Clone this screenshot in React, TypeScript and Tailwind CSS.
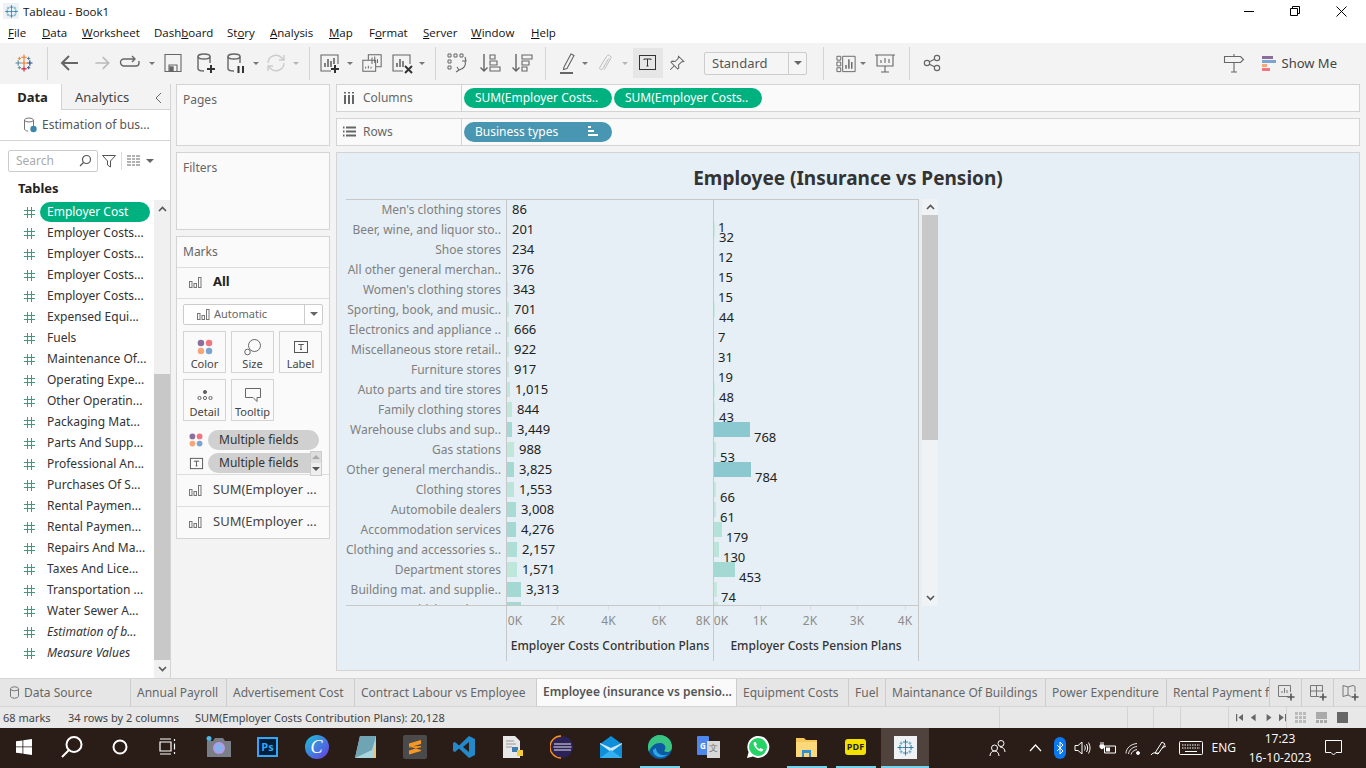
import type { ReactNode } from 'react';

const MENU = [
  { u: 'F', rest: 'ile', w: 'w-[34px]' },
  { u: 'D', rest: 'ata', w: 'w-[40px]' },
  { u: 'W', rest: 'orksheet', w: 'w-[72px]' },
  { pre: 'Dash', u: 'b', rest: 'oard', w: 'w-[73px]' },
  { pre: 'St', u: 'o', rest: 'ry', w: 'w-[43px]' },
  { u: 'A', rest: 'nalysis', w: 'w-[59px]' },
  { u: 'M', rest: 'ap', w: 'w-[40px]' },
  { pre: 'F', u: 'o', rest: 'rmat', w: 'w-[54px]' },
  { u: 'S', rest: 'erver', w: 'w-[48px]' },
  { u: 'W', rest: 'indow', w: 'w-[60px]' },
  { u: 'H', rest: 'elp', w: 'w-[40px]' },
];

const FIELDS = [
  'Employer Costs...', 'Employer Costs...', 'Employer Costs...', 'Employer Costs...', 'Expensed Equi...', 'Fuels',
  'Maintenance Of...', 'Operating Expe...', 'Other Operatin...', 'Packaging Mat...', 'Parts And Supp...', 'Professional An...',
  'Purchases Of S...', 'Rental Paymen...', 'Rental Paymen...', 'Repairs And Ma...', 'Taxes And Lice...', 'Transportation ...', 'Water Sewer A...',
];

const CHART_ROWS = [
  { label: "Men's clothing stores", v1: '86', w1: 0, c1: '', v2: '1', w2: 0, c2: '', dy: 'translate-y-[17px]' },
  { label: 'Beer, wine, and liquor sto..', v1: '201', w1: 0, c1: '', v2: '32', w2: 1, c2: 'bg-[#cdeade]', dy: 'translate-y-[7px]' },
  { label: 'Shoe stores', v1: '234', w1: 0, c1: '', v2: '12', w2: 0, c2: '', dy: 'translate-y-[7px]' },
  { label: 'All other general merchan..', v1: '376', w1: 0, c1: '', v2: '15', w2: 0, c2: '', dy: 'translate-y-[7px]' },
  { label: "Women's clothing stores", v1: '343', w1: 1, c1: 'bg-[#cdeade]', v2: '15', w2: 0, c2: '', dy: 'translate-y-[7px]' },
  { label: 'Sporting, book, and  music..', v1: '701', w1: 2, c1: 'bg-[#c6e8dc]', v2: '44', w2: 1, c2: 'bg-[#cdeade]', dy: 'translate-y-[7px]' },
  { label: 'Electronics and appliance ..', v1: '666', w1: 2, c1: 'bg-[#c6e8dc]', v2: '7', w2: 0, c2: '', dy: 'translate-y-[7px]' },
  { label: 'Miscellaneous store retail..', v1: '922', w1: 2, c1: 'bg-[#c6e8dc]', v2: '31', w2: 0, c2: '', dy: 'translate-y-[7px]' },
  { label: 'Furniture stores', v1: '917', w1: 2, c1: 'bg-[#c6e8dc]', v2: '19', w2: 0, c2: '', dy: 'translate-y-[7px]' },
  { label: 'Auto parts and tire stores', v1: '1,015', w1: 3, c1: 'bg-[#bfe7da]', v2: '48', w2: 1, c2: 'bg-[#cdeade]', dy: 'translate-y-[7px]' },
  { label: 'Family clothing stores', v1: '844', w1: 5, c1: 'bg-[#bfe7da]', v2: '43', w2: 1, c2: 'bg-[#cdeade]', dy: 'translate-y-[7px]' },
  { label: 'Warehouse clubs and sup..', v1: '3,449', w1: 5, c1: 'bg-[#a3d8d3]', v2: '768', w2: 36, c2: 'bg-[#8bc8d0]', dy: 'translate-y-[7px]' },
  { label: 'Gas stations', v1: '988', w1: 7, c1: 'bg-[#bfe7da]', v2: '53', w2: 2, c2: 'bg-[#c6e8dc]', dy: 'translate-y-[7px]' },
  { label: 'Other general merchandis..', v1: '3,825', w1: 7, c1: 'bg-[#a3d8d3]', v2: '784', w2: 37, c2: 'bg-[#8bc8d0]', dy: 'translate-y-[7px]' },
  { label: 'Clothing stores', v1: '1,553', w1: 7, c1: 'bg-[#bbe5da]', v2: '66', w2: 2, c2: 'bg-[#c6e8dc]', dy: 'translate-y-[7px]' },
  { label: 'Automobile dealers', v1: '3,008', w1: 9, c1: 'bg-[#a9dbd5]', v2: '61', w2: 2, c2: 'bg-[#c6e8dc]', dy: 'translate-y-[7px]' },
  { label: 'Accommodation services', v1: '4,276', w1: 9, c1: 'bg-[#a3d8d3]', v2: '179', w2: 8, c2: 'bg-[#b5e2d8]', dy: 'translate-y-[7px]' },
  { label: 'Clothing and accessories s..', v1: '2,157', w1: 10, c1: 'bg-[#aedfd6]', v2: '130', w2: 5, c2: 'bg-[#bbe5da]', dy: 'translate-y-[7px]' },
  { label: 'Department stores', v1: '1,571', w1: 10, c1: 'bg-[#bde7db]', v2: '453', w2: 21, c2: 'bg-[#a3d8d3]', dy: 'translate-y-[7px]' },
  { label: 'Building mat. and supplie..', v1: '3,313', w1: 14, c1: 'bg-[#a3d8d3]', v2: '74', w2: 3, c2: 'bg-[#c6e8dc]', dy: 'translate-y-[7px]' },
  { label: 'Motor vehicle and parts', v1: '4,313', w1: 14, c1: 'bg-[#a3d8d3]', v2: '', w2: 4, c2: 'bg-[#c6e8dc]', dy: 'translate-y-[7px]' },
];

const TABS = [
  { label: 'Annual Payroll', w: 'w-[96px]' },
  { label: 'Advertisement Cost', w: 'w-[128px]' },
  { label: 'Contract Labour vs Employee', w: 'w-[182px]' },
  { label: 'Employee (insurance vs pensio...', w: 'w-[200px]', active: true },
  { label: 'Equipment Costs', w: 'w-[112px]' },
  { label: 'Fuel', w: 'w-[37px]' },
  { label: 'Maintanance Of Buildings', w: 'w-[160px]' },
  { label: 'Power Expenditure', w: 'w-[121px]' },
  { label: 'Rental Payment for Buildings', w: 'w-[103px]' },
];

function Svg({ s = 24, children, className }: { s?: number; children: ReactNode; className?: string }) {
  return (
    <svg width={s} height={s} viewBox="0 0 24 24" fill="none" stroke="currentColor" strokeWidth={1.4} className={className}>
      {children}
    </svg>
  );
}

function Caret() {
  return (
    <div className="flex w-full items-center justify-center">
      <div className="h-0 w-0 border-x-[3px] border-t-[3px] border-x-transparent border-t-[#777]" />
    </div>
  );
}

function Sep() {
  return <div className="h-[33px] w-px shrink-0 bg-[#d4d4d4]" />;
}

function TableauLogo({ colored, s = 20 }: { colored?: boolean; s?: number }) {
  const items = [
    { x: 12, y: 5, r: 3.2, c: colored ? '#e8762b' : '#2f7fa8' },
    { x: 12, y: 19, r: 3.2, c: colored ? '#c72035' : '#2f7fa8' },
    { x: 5, y: 12, r: 3.2, c: colored ? '#5b879b' : '#2f7fa8' },
    { x: 19, y: 12, r: 3.2, c: colored ? '#1f447e' : '#2f7fa8' },
    { x: 12, y: 12, r: 3.8, c: colored ? '#e8762b' : '#2f7fa8' },
    { x: 6.5, y: 6.5, r: 2, c: colored ? '#eb912b' : '#6aa9c7' },
    { x: 17.5, y: 6.5, r: 2, c: colored ? '#59879b' : '#6aa9c7' },
    { x: 6.5, y: 17.5, r: 2, c: colored ? '#7099a6' : '#6aa9c7' },
    { x: 17.5, y: 17.5, r: 2, c: colored ? '#5b6591' : '#6aa9c7' },
  ];
  return (
    <svg width={s} height={s} viewBox="0 0 24 24">
      {items.map((p, i) => (
        <path key={i} d={`M${p.x - p.r} ${p.y}H${p.x + p.r}M${p.x} ${p.y - p.r}V${p.y + p.r}`} stroke={p.c} strokeWidth={1.3} />
      ))}
    </svg>
  );
}

function BarsMark() {
  return (
    <svg width={14} height={14} viewBox="0 0 14 14" fill="none" stroke="#777" strokeWidth={1}>
      <rect x="1.5" y="6.5" width="2.5" height="6" />
      <rect x="6" y="8.5" width="2.5" height="4" />
      <rect x="10.5" y="2.5" width="2.5" height="10" />
    </svg>
  );
}

function HashIcon() {
  return (
    <svg width={13} height={13} viewBox="0 0 13 13" stroke="#3f9a78" strokeWidth={1} shapeRendering="crispEdges">
      <path d="M4.5 1v11M8.5 1v11M1 4.500h11M1 8.500h11" />
    </svg>
  );
}

function FourDots({ s = 20 }: { s?: number }) {
  return (
    <svg width={s} height={s} viewBox="0 0 20 20">
      <circle cx="5.5" cy="5.5" r="3.6" fill="#8a6f9c" />
      <circle cx="14.5" cy="5.5" r="3.6" fill="#f2747f" />
      <circle cx="5.5" cy="14.5" r="3.6" fill="#f5a77a" />
      <circle cx="14.5" cy="14.5" r="3.6" fill="#7ba4d0" />
    </svg>
  );
}

function TBox({ s = 16 }: { s?: number }) {
  return (
    <svg width={s} height={s} viewBox="0 0 16 16" fill="none" stroke="#555" strokeWidth={1}>
      <rect x="1.5" y="2.5" width="13" height="11" />
      <path d="M5.5 6V5.5h5V6M8 5.5v5M7 10.5h2" />
    </svg>
  );
}

function CheckPlus({ children }: { children: ReactNode }) {
  return (
    <Svg className="text-[#666]">
      {children}
      <path d="M17 14v8M13 18h8" stroke="#333" strokeWidth={2} />
    </Svg>
  );
}

function Toolbar() {
  return (
    <div className="flex h-[41px] items-center bg-[#f3f3f3] text-[#666]">
      <div className="flex w-[47px] justify-center"><TableauLogo colored /></div>
      <Sep />
      <div className="flex w-[44px] justify-center">
        <Svg><path d="M20 12H5M11 5l-7 7 7 7" strokeWidth={2} /></Svg>
      </div>
      <div className="flex w-[20px] justify-center text-[#bbb]">
        <Svg><path d="M4 12h15M13 5l7 7-7 7" strokeWidth={2} /></Svg>
      </div>
      <div className="flex w-[36px] justify-center">
        <Svg><path d="M16 8H6a3.5 3.5 0 0 0 0 7h12a3 3 0 0 0 3-3V10M14 5l3 3-3 3" /></Svg>
      </div>
      <div className="w-[8px]"><Caret /></div>
      <div className="flex w-[34px] justify-center">
        <Svg><path d="M4 3.5h16v17H4zM8 20v-6h8v6" strokeWidth={1.1} /><rect x="9" y="16" width="3" height="4" fill="currentColor" /></Svg>
      </div>
      <div className="flex w-[32px] justify-center">
        <CheckPlus><ellipse cx="10" cy="5.5" rx="6" ry="2.5" /><path d="M4 5.500v12c0 1.400 2.500 2.500 6 2.500M16 5.500V12" /></CheckPlus>
      </div>
      <div className="flex w-[28px] justify-center">
        <Svg><ellipse cx="10" cy="5.5" rx="6" ry="2.5" /><path d="M4 5.500v12c0 1.400 2.500 2.500 6 2.500M16 5.500V12" /><path d="M14.500 15v7M19 15v7" stroke="#333" strokeWidth={2} /></Svg>
      </div>
      <div className="w-[12px]"><Caret /></div>
      <div className="flex w-[28px] justify-center text-[#ccc]">
        <Svg><path d="M4 12a8 8 0 0 1 14-5l2 2M20 12a8 8 0 0 1-14 5l-2-2M20 4v5h-5M4 20v-5h5" /></Svg>
      </div>
      <div className="w-[12px] opacity-50"><Caret /></div>
      <div className="w-[7px]" />
      <Sep />
      <div className="flex w-[36px] pl-[8px]">
        <CheckPlus>
          <path d="M13 20H3V4h17v9" strokeWidth={1.1} />
          <path d="M7 16v-4M10 16V8M13 16v-6M16 13V7" strokeWidth={1.6} />
        </CheckPlus>
      </div>
      <div className="w-[8px]"><Caret /></div>
      <div className="flex w-[36px] justify-center">
        <Svg s={22}><path d="M8 9V3h14v13h-6M2 9h14v12H2z" strokeWidth={1.1} /><path d="M12 13V6M15 12V5M18 12V8M5 18v-2M8 18v-3M11 18v-2" strokeWidth={1.1} /></Svg>
      </div>
      <div className="flex w-[24px] justify-center">
        <Svg>
          <path d="M13 20H3V4h17v9" strokeWidth={1.1} />
          <path d="M7 16v-4M10 16V8M13 16v-6" strokeWidth={1.6} />
          <path d="M15 15l7 7M22 15l-7 7" stroke="#333" strokeWidth={2} />
        </Svg>
      </div>
      <div className="w-[16px]"><Caret /></div>
      <div className="w-[5px]" />
      <Sep />
      <div className="flex w-[42px] justify-center">
        <Svg><path d="M3 3h3v3H3zM9 3h3v3H9zM15 3h3v3h-3zM3 9h3v3H3zM3 15h3v3H3z" strokeWidth={1} /><path d="M20 10c1.500 4-1 8-6 9M12 16l2 3-3 2M20 6l1 4-4 0" strokeWidth={1.1} /></Svg>
      </div>
      <div className="flex w-[24px] justify-center">
        <Svg><path d="M6 3v17M2.500 16.500 6 20l3.500-3.500" /><path d="M12 4h5v4h-5zM12 10h7v4h-7zM12 16h10v4H12z" strokeWidth={1.1} /></Svg>
      </div>
      <div className="flex w-[40px] justify-center">
        <Svg><path d="M6 3v17M2.500 16.500 6 20l3.500-3.500" /><path d="M12 4h10v4H12zM12 10h7v4h-7zM12 16h5v4h-5z" strokeWidth={1.1} /></Svg>
      </div>
      <div className="w-[3px]" />
      <Sep />
      <div className="flex w-[34px] pl-[10px]">
        <Svg><path d="M8 16 15 3l3 1.500-7 13-3.500 1z" strokeWidth={1.1} /><path d="M4 22h13" strokeWidth={2} /></Svg>
      </div>
      <div className="w-[10px]"><Caret /></div>
      <div className="flex w-[30px] justify-center text-[#bbb]">
        <Svg s={20}><path d="M16.500 6.500 9 19c-1.200 2-4.400.2-3.200-1.800L14 4c1.800-3 6.500-.3 4.800 2.700L11 20" strokeWidth={1.2} /></Svg>
      </div>
      <div className="w-[10px] opacity-50"><Caret /></div>
      <div className="w-[3px]" />
      <div className="flex h-[30px] w-[30px] items-center justify-center bg-[#e6e6e6]">
        <svg width={18} height={16} viewBox="0 0 18 16" fill="none" stroke="#333" strokeWidth={1}>
          <rect x="0.5" y="0.5" width="16" height="14" />
          <path d="M5 5V4h7v1M8.500 4v7M7.500 11h2" />
        </svg>
      </div>
      <div className="flex w-[28px] justify-center">
        <Svg s={18}><path d="M14 3l7 7-3 .5-4 4 .5 4L13 20 4 11l1.500-1.500 4 .5 4-4zM8 16l-5 5" /></Svg>
      </div>
      <div className="w-[13px]" />
      <div className="flex h-[23px] w-[103px] items-center rounded-[2px] border border-[#ccc] bg-[#f5f5f5]">
        <span className="flex-1 pl-[7px] pt-[1px] text-[13px] text-[#555]">Standard</span>
        <div className="flex h-full w-[18px] items-center justify-center border-l border-[#ccc]">
          <div className="h-0 w-0 border-x-[4px] border-t-[4px] border-x-transparent border-t-[#666]" />
        </div>
      </div>
      <div className="w-[16px]" />
      <Sep />
      <div className="flex w-[34px] pl-[11px]">
        <Svg><path d="M2 5h4v4H2zM2 11h4v4H2zM2 17h4v4H2zM8 5h13v16H8z" strokeWidth={1} /><path d="M11.500 18v-4M14.500 18V8M17.500 18v-7" strokeWidth={1.5} /></Svg>
      </div>
      <div className="w-[10px]"><Caret /></div>
      <div className="flex w-[34px] justify-center">
        <Svg><path d="M2 4h20M4 4v11h16V4M12 15v6M8 21h8" strokeWidth={1.1} /><path d="M8 12V9M12 12V7M16 12V8" strokeWidth={1.1} /></Svg>
      </div>
      <div className="w-[7px]" />
      <Sep />
      <div className="flex w-[44px] justify-center">
        <Svg s={20}><circle cx="6" cy="12" r="3.200" /><circle cx="18" cy="6" r="3.200" /><circle cx="18" cy="18" r="3.200" /><path d="M9 10.500l6-3M9 13.500l6 3" /></Svg>
      </div>
      <div className="ml-auto flex items-center">
        <Svg><path d="M12 3v2M2.500 5.500h16l3 3-3 3h-16zM12 11.500v9M9 21h6" strokeWidth={1.1} /></Svg>
        <div className="ml-[16px] flex w-[15px] flex-col gap-[1px]">
          <div className="h-[3px] w-[11px] bg-[#8a6f9c]" />
          <div className="h-[3px] w-[14px] bg-[#7ba4d0]" />
          <div className="h-[3px] w-[5px] bg-[#f5a77a]" />
          <div className="h-[3px] w-[8px] bg-[#f2747f]" />
        </div>
        <span className="ml-[5px] mr-[29px] pt-[1px] text-[13px] text-[#444]">Show Me</span>
      </div>
    </div>
  );
}

function LeftPanel() {
  return (
    <div className="flex h-[594px] w-[171px] shrink-0 flex-col border-r border-[#d4d4d4] bg-white">
      <div className="flex h-[26px] bg-[#f3f3f3]">
        <div className="flex w-[61px] items-center justify-center bg-white pl-[4px] pt-[3px] text-[13px] font-bold text-[#222]">Data</div>
        <div className="flex flex-1 items-center border-b border-l border-[#d4d4d4] pl-[13px] pt-[3px] text-[13px] text-[#444]">
          Analytics
          <svg width={10} height={12} viewBox="0 0 10 12" fill="none" stroke="#666" className="ml-[25px]"><path d="M7 1 2 6l5 5" /></svg>
        </div>
      </div>
      <div className="flex h-[31px] items-center border-b border-[#d4d4d4] pl-[23px] text-[12px] text-[#555]">
        <svg width={14} height={16} viewBox="0 0 14 16" fill="none" stroke="#777" strokeWidth={1}>
          <ellipse cx="6" cy="3" rx="4.500" ry="2" />
          <path d="M1.500 3v9c0 1 1.500 2 3.500 2M10.500 3v6" />
          <circle cx="10.500" cy="12" r="3.200" fill="#3d85ad" stroke="none" />
        </svg>
        <span className="ml-[5px] whitespace-nowrap">Estimation of bus...</span>
      </div>
      <div className="mt-[9px] flex h-[22px] items-center pl-[8px]">
        <div className="flex h-[22px] w-[90px] items-center justify-between rounded-[2px] border border-[#ccc] pl-[7px] pr-[5px] text-[12px] text-[#aaa]">
          Search
          <svg width={13} height={13} viewBox="0 0 13 13" fill="none" stroke="#555" strokeWidth={1.2}><circle cx="7.500" cy="5.500" r="4" /><path d="M4.500 8.500 1 12" /></svg>
        </div>
        <svg width={14} height={14} viewBox="0 0 14 14" fill="none" stroke="#555" className="ml-[4px]"><path d="M.5 1.500h13L8.500 7v6l-3-2V7z" /></svg>
        <div className="ml-[5px] h-[18px] w-px bg-[#ddd]" />
        <svg width={13} height={11} viewBox="0 0 13 11" stroke="#666" className="ml-[5px]"><path d="M0 1h13M0 4h13M0 7h13M0 10h13" /><path d="M4.500 0v11M8.500 0v11" stroke="#fff" /></svg>
        <div className="ml-[6px] h-0 w-0 border-x-[4px] border-t-[4px] border-x-transparent border-t-[#666]" />
      </div>
      <div className="mt-[6px] h-[20px] pl-[18px] text-[13px] font-bold leading-[20px] text-[#222]">Tables</div>
      <div className="mt-[2px] flex min-h-0 flex-1">
        <div className="flex-1 overflow-hidden pl-[23px] pt-[2px]">
          <div className="flex h-[21px] items-center">
            <HashIcon />
            <span className="ml-[4px] flex h-[20px] w-[110px] items-center rounded-full bg-[#00b180] pl-[7px] text-[12px] text-white">Employer Cost</span>
          </div>
          {FIELDS.map((f, i) => (
            <div key={i} className="flex h-[21px] items-center">
              <HashIcon />
              <span className="ml-[11px] whitespace-nowrap text-[12px] text-[#333]">{f}</span>
            </div>
          ))}
          <div className="flex h-[21px] items-center">
            <HashIcon />
            <span className="ml-[11px] whitespace-nowrap text-[12px] italic text-[#333]">Estimation of b...</span>
          </div>
          <div className="flex h-[21px] items-center">
            <HashIcon />
            <span className="ml-[11px] whitespace-nowrap text-[12px] italic text-[#333]">Measure Values</span>
          </div>
        </div>
        <div className="flex w-[16px] flex-col bg-[#f0f0f0]">
          <div className="flex h-[18px] items-center justify-center">
            <svg width={9} height={6} viewBox="0 0 9 6" fill="none" stroke="#555" strokeWidth={1.6}><path d="M1 5l3.500-3.500L8 5" /></svg>
          </div>
          <div className="h-[156px]" />
          <div className="flex-1 bg-[#c8c8c8]" />
          <div className="flex h-[18px] items-center justify-center">
            <svg width={9} height={6} viewBox="0 0 9 6" fill="none" stroke="#555" strokeWidth={1.6}><path d="M1 1l3.500 3.500L8 1" /></svg>
          </div>
        </div>
      </div>
    </div>
  );
}

function MarkButton({ label, icon }: { label: string; icon: ReactNode }) {
  return (
    <div className="flex h-[42px] w-[43px] flex-col items-center border border-[#d4d4d4] pt-[5px] text-[11px] text-[#444]">
      <div className="flex h-[20px] items-center">{icon}</div>
      <span className="leading-[14px]">{label}</span>
    </div>
  );
}

function MarksRow({ label, bold }: { label: string; bold?: boolean }) {
  return (
    <div className={`flex items-center border-t border-[#ddd] pl-[11px] ${bold ? 'h-[31px] pb-[2px]' : 'h-[32px]'}`}>
      <BarsMark />
      <span className={`ml-[11px] whitespace-nowrap ${bold ? 'text-[13px] font-bold text-[#222]' : 'text-[13px] text-[#444]'}`}>{label}</span>
    </div>
  );
}

function MiddleColumn() {
  return (
    <div className="ml-[5px] flex w-[154px] shrink-0 flex-col gap-[6px]">
      <div className="h-[62px] border border-[#d4d4d4] bg-[#fafafa] pl-[6px] pt-[6px] text-[12px] text-[#666]">Pages</div>
      <div className="h-[78px] border border-[#d4d4d4] bg-[#fafafa] pl-[6px] pt-[6px] text-[12px] text-[#666]">Filters</div>
      <div className="h-[303px] border border-[#d4d4d4] bg-[#fafafa]">
        <div className="flex h-[30px] items-center pl-[6px] text-[12px] text-[#666]">Marks</div>
        <MarksRow label="All" bold />
        <div className="border-t border-[#ddd] px-[6px] pt-[5px]">
          <div className="flex h-[21px] items-center rounded-[2px] border border-[#ccc] bg-[#fff]">
            <div className="ml-[12px]"><BarsMark /></div>
            <span className="ml-[4px] flex-1 text-[11px] text-[#666]">Automatic</span>
            <div className="flex h-full w-[18px] items-center justify-center border-l border-[#ccc]">
              <div className="h-0 w-0 border-x-[4px] border-t-[4px] border-x-transparent border-t-[#666]" />
            </div>
          </div>
          <div className="mt-[6px] flex gap-[5px]">
            <MarkButton label="Color" icon={<FourDots s={18} />} />
            <MarkButton label="Size" icon={
              <svg width={18} height={18} viewBox="0 0 18 18" fill="none" stroke="#666"><circle cx="10.500" cy="7.500" r="6" /><circle cx="3.500" cy="14" r="2.800" fill="#fafafa" /></svg>
            } />
            <MarkButton label="Label" icon={<TBox />} />
          </div>
          <div className="mt-[6px] flex gap-[5px]">
            <MarkButton label="Detail" icon={
              <svg width={16} height={14} viewBox="0 0 16 14" fill="none" stroke="#666"><circle cx="8" cy="4" r="1.600" fill="#666" /><circle cx="2.500" cy="10" r="1.600" /><circle cx="8" cy="10" r="1.600" /><circle cx="13.500" cy="10" r="1.600" /></svg>
            } />
            <MarkButton label="Tooltip" icon={
              <svg width={16} height={16} viewBox="0 0 16 16" fill="none" stroke="#666"><path d="M.5 1.500h15v9H12v4l-4-4H.5z" /></svg>
            } />
          </div>
        </div>
        <div className="h-[9px]" />
        <div className="flex h-[21px] items-center pl-[11px]">
          <FourDots s={16} />
          <span className="ml-[4px] flex h-[20px] w-[111px] items-center rounded-full bg-[#d0d0d0] pl-[11px] text-[12px] text-[#333]">Multiple fields</span>
        </div>
        <div className="mt-[2px] flex h-[21px] items-center pl-[12px]">
          <TBox s={15} />
          <span className="ml-[4px] flex h-[20px] w-[102px] items-center overflow-hidden whitespace-nowrap rounded-l-full bg-[#d0d0d0] pl-[11px] text-[12px] text-[#333]">Multiple fields</span>
          <div className="flex h-[25px] w-[12px] flex-col border border-[#ccc] bg-[#ddd]">
            <div className="flex flex-1 items-center justify-center"><div className="h-0 w-0 border-x-[4px] border-b-[4px] border-x-transparent border-b-[#aaa]" /></div>
            <div className="flex flex-1 items-center justify-center bg-[#eee]"><div className="h-0 w-0 border-x-[4px] border-t-[4px] border-x-transparent border-t-[#555]" /></div>
          </div>
        </div>
        <MarksRow label="SUM(Employer ..." />
        <MarksRow label="SUM(Employer ..." />
      </div>
    </div>
  );
}

function Pill({ label, children, color }: { label: string; children?: ReactNode; color: string }) {
  return (
    <div className={`flex h-[20px] w-[148px] items-center rounded-full pl-[11px] text-[12px] text-white ${color}`}>
      <span className="whitespace-nowrap">{label}</span>
      {children}
    </div>
  );
}

function Axis({ items }: { items: { label: string; cls: string; tick?: boolean }[] }) {
  return (
    <div className="flex h-[27px]">
      {items.map((a) => (
        <div key={a.label} className={`flex flex-col items-center ${a.cls}`}>
          <div className={`h-[4px] w-px ${a.tick ? 'bg-[#ddd]' : ''}`} />
          <span className="mt-[3px] whitespace-nowrap text-[12px] leading-[16px] text-[#8c8c8c]">{a.label}</span>
        </div>
      ))}
    </div>
  );
}

function Chart() {
  return (
    <div className="flex h-[519px] flex-col border border-[#d4d4d4] bg-[#e6eff5]">
      <div className="flex h-[46px] items-center justify-center pt-[6px] text-[19px] font-bold text-[#333]">Employee (Insurance vs Pension)</div>
      <div className="flex pl-[9px]">
        <div className="w-[573px]">
          <div className="h-[407px] overflow-hidden border-y border-[#c8c8c8]">
            {CHART_ROWS.map((r) => (
              <div key={r.label} className="flex h-[20px]">
                <div className="w-[160px] overflow-hidden whitespace-nowrap pr-[5px] text-right text-[12px] leading-[20px] text-[#808080]">{r.label}</div>
                <div className="flex w-[207px] items-center border-l border-[#c8c8c8]">
                  <div className={`h-[15px] ${r.c1}`} style={{ width: r.w1 }} />
                  <span className="ml-[5px] pt-[1px] text-[13px] text-[#222]">{r.v1}</span>
                </div>
                <div className="flex w-[206px] items-center border-x border-[#c8c8c8]">
                  <div className={`h-[15px] ${r.c2}`} style={{ width: r.w2 }} />
                  <span className={`ml-[4px] pt-[2px] text-[13px] text-[#222] ${r.dy}`}>{r.v2}</span>
                </div>
              </div>
            ))}
          </div>
          <div className="flex h-[55px]">
            <div className="w-[160px]" />
            <div className="flex w-[207px] flex-col border-l border-[#c8c8c8]">
              <Axis items={[
                { label: '0K', cls: 'w-[16px]' },
                { label: '2K', cls: 'ml-[9px] w-[51px]', tick: true },
                { label: '4K', cls: 'w-[51px]', tick: true },
                { label: '6K', cls: 'w-[50px]', tick: true },
                { label: '8K', cls: 'ml-[9px] w-[20px]' },
              ]} />
              <div className="whitespace-nowrap pt-[3px] text-center text-[12px] font-medium leading-[20px] text-[#333]">Employer Costs Contribution Plans</div>
            </div>
            <div className="flex w-[206px] flex-col border-x border-[#c8c8c8]">
              <Axis items={[
                { label: '0K', cls: 'w-[14px]' },
                { label: '1K', cls: 'ml-[9px] w-[46px]', tick: true },
                { label: '2K', cls: 'ml-[4px] w-[46px]', tick: true },
                { label: '3K', cls: 'ml-[1px] w-[46px]', tick: true },
                { label: '4K', cls: 'ml-[12px] w-[26px]', tick: true },
              ]} />
              <div className="whitespace-nowrap pt-[3px] text-center text-[12px] font-medium leading-[20px] text-[#333]">Employer Costs Pension Plans</div>
            </div>
          </div>
        </div>
        <div className="ml-[3px] flex h-[407px] w-[16px] flex-col bg-[#f0f3f5]">
          <div className="flex h-[16px] items-center justify-center">
            <svg width={9} height={6} viewBox="0 0 9 6" fill="none" stroke="#555" strokeWidth={1.6}><path d="M1 5l3.500-3.500L8 5" /></svg>
          </div>
          <div className="h-[225px] bg-[#c8c8c8]" />
          <div className="flex-1" />
          <div className="flex h-[16px] items-center justify-center">
            <svg width={9} height={6} viewBox="0 0 9 6" fill="none" stroke="#555" strokeWidth={1.6}><path d="M1 1l3.500 3.500L8 1" /></svg>
          </div>
        </div>
      </div>
    </div>
  );
}

function TabBar() {
  return (
    <div className="flex h-[30px] border-y border-[#d4d4d4] bg-[#e6e6e6] text-[12px] text-[#666]">
      <div className="flex w-[131px] items-center border-r border-[#ccc] pl-[9px] pt-[1px]">
        <svg width={11} height={13} viewBox="0 0 11 13" fill="none" stroke="#777"><ellipse cx="5.500" cy="2.800" rx="4" ry="2" /><path d="M1.500 2.800v7.400c0 1 1.800 2 4 2s4-1 4-2V2.800" /></svg>
        <span className="ml-[4px]">Data Source</span>
      </div>
      {TABS.map((t) => (
        <div
          key={t.label}
          className={`flex shrink-0 items-center overflow-hidden whitespace-nowrap border-r border-[#ccc] pl-[6px] ${t.w} ${t.active ? 'bg-[#fafafa] font-semibold text-[#555]' : 'pt-[1px]'}`}
        >
          {t.label}
        </div>
      ))}
      {[0, 1, 2].map((i) => (
        <div key={i} className="flex w-[32px] items-center justify-center border-r border-[#ccc] last:border-r-0">
          <svg width={18} height={18} viewBox="0 0 18 18" fill="none" stroke="#777">
            {i === 0 && <path d="M11 13.500H1.500v-11h12V9M5 10V8M7.500 10V5M10 10V7" />}
            {i === 1 && <path d="M10 13.500H1.500v-11h12V9M1.500 8h12M7.500 2.500v11" />}
            {i === 2 && <path d="M10 13.500l-3-1.500-5 1.500V2.500l5 1.500 5-1.500 2 1V9M7 4v8" />}
            <path d="M14 10.500v7M10.500 14h7" stroke="#555" strokeWidth={1.6} />
          </svg>
        </div>
      ))}
    </div>
  );
}

function StatusBar() {
  return (
    <div className="flex h-[21px] items-center bg-[#e8e8e8] text-[11px] text-[#444]">
      <span className="ml-[3px] w-[65px]">68 marks</span>
      <span className="w-[127px]">34 rows by 2 columns</span>
      <span className="w-[804px] whitespace-nowrap">SUM(Employer Costs Contribution Plans): 20,128</span>
      <div className="h-full w-[128px] border-l border-[#d4d4d4]" />
      <div className="h-full w-[26px] border-l border-[#d4d4d4]" />
      <div className="h-full w-[27px] border-l border-[#d4d4d4]" />
      <div className="h-full w-[48px] border-l border-[#d4d4d4]" />
      <div className="flex h-full w-[58px] items-center gap-[7px] border-l border-[#d4d4d4] pl-[7px]">
        <svg width={9} height={9} viewBox="0 0 9 9" fill="#666"><path d="M0 0h1.500v9H0zM9 0v9L3 4.500z" /></svg>
        <svg width={9} height={9} viewBox="0 0 9 9" fill="#666"><path d="M7 0v9L1 4.500z" /></svg>
        <svg width={9} height={9} viewBox="0 0 9 9" fill="#666"><path d="M2 0v9l6-4.500z" /></svg>
        <svg width={9} height={9} viewBox="0 0 9 9" fill="#666"><path d="M7.500 0H9v9H7.500zM0 0v9l6-4.500z" /></svg>
      </div>
      <div className="flex h-full flex-1 items-center border-l border-[#d4d4d4] pl-[8px]">
        <svg width={11} height={11} viewBox="0 0 11 11" fill="#bbb"><path d="M0 0h3v3H0zM4 0h3v3H4zM8 0h3v3H8zM0 4h3v3H0zM4 4h3v3H4zM8 4h3v3H8zM0 8h3v3H0zM4 8h3v3H4zM8 8h3v3H8z" /></svg>
        <svg width={11} height={11} viewBox="0 0 11 11" fill="#aaa" className="ml-[10px]"><path d="M0 0h11v7H0zM0 8h3v3H0zM4 8h3v3H4zM8 8h3v3H8z" /></svg>
        <div className="ml-[10px] h-[11px] w-[11px] bg-[#666]" />
      </div>
    </div>
  );
}

function TaskSlot({ children, w = 'w-[49px]', active, running }: { children: ReactNode; w?: string; active?: boolean; running?: boolean }) {
  return (
    <div className={`flex h-full shrink-0 flex-col items-center ${w} ${active ? 'bg-[#50433e]' : ''}`}>
      <div className="flex flex-1 items-center justify-center">{children}</div>
      <div className={`h-[2px] w-[40px] ${running ? 'bg-[#76d1ec]' : ''} ${active ? 'w-full' : ''}`} />
    </div>
  );
}

function Taskbar() {
  return (
    <div className="flex h-[40px] items-center bg-[#2a1c17] font-['Open_Sans',sans-serif] text-white">
      <TaskSlot w="w-[48px]">
        <svg width={16} height={16} viewBox="0 0 16 16" fill="#fff"><path d="M0 2.300 6.500 1.400V7.500H0zM7.300 1.300 16 0v7.500H7.300zM0 8.300h6.500v6.300L0 13.700zM7.300 8.300H16V16l-8.700-1.200z" /></svg>
      </TaskSlot>
      <TaskSlot w="w-[48px]">
        <svg width={24} height={24} viewBox="0 0 24 24" fill="none" stroke="#fff" strokeWidth={2}><circle cx="14" cy="9.500" r="7.500" /><path d="M9 15 2 22" /></svg>
      </TaskSlot>
      <TaskSlot w="w-[48px]">
        <svg width={16} height={16} viewBox="0 0 16 16" fill="none" stroke="#fff" strokeWidth={2}><circle cx="8" cy="8" r="6.500" /></svg>
      </TaskSlot>
      <TaskSlot w="w-[48px]">
        <svg width={18} height={18} viewBox="0 0 18 18" fill="none" stroke="#fff" strokeWidth={1.2}><path d="M1 4h11v9H1zM1 1h11M1 16h11M15.500 1v2M15.500 5.500v6M15.500 14v2" /></svg>
      </TaskSlot>
      <div className="w-[2px] shrink-0" />
      <TaskSlot>
        <svg width={26} height={22} viewBox="0 0 26 22"><path d="M1 5h6l2-3h8l2 3h6v16H1z" fill="#7a7f87" /><circle cx="13" cy="12" r="6" fill="#b39be8" /><circle cx="13" cy="12" r="3.500" fill="#7fb5ef" /><circle cx="3" cy="2.500" r="2.500" fill="#4fb4e8" /></svg>
      </TaskSlot>
      <TaskSlot>
        <div className="flex h-[20px] w-[21px] items-center justify-center border-2 border-[#31a8ff] bg-[#001e36] text-[11px] font-bold text-[#31a8ff]">Ps</div>
      </TaskSlot>
      <TaskSlot>
        <div className="flex h-[24px] w-[24px] items-center justify-center rounded-full bg-[linear-gradient(135deg,#19c3d6,#6a3be4)] font-['Liberation_Serif',serif] text-[18px] italic text-white">C</div>
      </TaskSlot>
      <TaskSlot>
        <svg width={23} height={24} viewBox="0 0 23 24"><path d="M6 1h16l-1 22H1z" fill="#a9d6dc" /><path d="M6 1h16l-4 14L1 23z" fill="#6fa4b4" /><path d="M22 1v22h-3z" fill="#e3c77f" /></svg>
      </TaskSlot>
      <TaskSlot>
        <div className="flex h-[24px] w-[24px] items-center justify-center rounded-[2px] bg-[#4a4a4a]">
          <svg width={14} height={16} viewBox="0 0 14 16" fill="#f89822"><path d="M13 1v4L1 8.500v-4zM1 7.500l12 3.500v-4zM13 8v4L1 15.500v-4z" /></svg>
        </div>
      </TaskSlot>
      <TaskSlot>
        <svg width={24} height={24} viewBox="0 0 24 24"><path d="M17 1l6 3v16l-6 3L7 13.500 3 17l-2-1V8l2-1 4 3.500z" fill="#2489ca" /><path d="M17 7v10l-6-5z" fill="#2a1c17" /></svg>
      </TaskSlot>
      <TaskSlot>
        <svg width={24} height={24} viewBox="0 0 24 24"><path d="M2 1h12l5 5v17H2z" fill="#e8e8e8" /><path d="M5 6h8M5 9h10M5 12h6" stroke="#999" /><path d="M11 12h6v5h-6z" fill="#3e7cb1" /><path d="M16 15h6v6h-6z" fill="#f6c93e" /></svg>
      </TaskSlot>
      <TaskSlot>
        <svg width={24} height={24} viewBox="0 0 24 24"><circle cx="12" cy="12" r="11" fill="#2c2255" /><path d="M4 9h17M3.500 12h18M4 15h17" stroke="#e9e6f5" strokeWidth={1} /><path d="M11 1a11 11 0 0 0 0 22" fill="none" stroke="#f7941e" strokeWidth={1.300} /></svg>
      </TaskSlot>
      <TaskSlot>
        <svg width={24} height={24} viewBox="0 0 24 24"><path d="M1 9 12 1l11 8v14H1z" fill="#0f8fd8" /><path d="M1 9l11 8 11-8v-1L12 13 1 8z" fill="#cfeafa" /><path d="M1 23l11-8 11 8z" fill="#35b0ef" /></svg>
      </TaskSlot>
      <TaskSlot running>
        <svg width={24} height={24} viewBox="0 0 24 24"><circle cx="12" cy="12" r="12" fill="#0c59a4" /><path d="M12 0a12 12 0 0 1 12 12c0 5-5 6-8 4 3-3 1-8-4-8-6 0-10 5-11 9A12 12 0 0 1 12 0z" fill="#39c481" /><path d="M8 13c0 6 7 9 12 6-6 6-15 3-15-4z" fill="#2fa6e8" /></svg>
      </TaskSlot>
      <TaskSlot>
        <div className="relative h-[22px] w-[23px]">
          <div className="absolute left-0 top-0 flex h-[19px] w-[12px] items-center justify-center rounded-[1px] bg-[#4f86ec] text-[8px] font-bold text-white">G</div>
          <div className="absolute bottom-0 right-0 h-[17px] w-[13px] bg-[#d8d8d8] text-center text-[9px] text-[#777]">文</div>
        </div>
      </TaskSlot>
      <TaskSlot>
        <svg width={24} height={24} viewBox="0 0 24 24"><path d="M1 23l1.600-6A11 11 0 1 1 7 21.500z" fill="#fff" /><circle cx="12" cy="12" r="9" fill="#25d366" /><path d="M8 7c-2 3 4 10 8 9.500l1.500-2-3-1.500-1 1c-1.500-.5-3-2-3.500-3.500l1-1L9.500 7z" fill="#fff" /></svg>
      </TaskSlot>
      <TaskSlot running>
        <svg width={23} height={21} viewBox="0 0 23 21"><path d="M1 1h8l2 2h11v17H1z" fill="#f6c859" /><path d="M1 5h21v15H1z" fill="#fbd97a" /><path d="M7 13h9v7h-2v-4H9v4H7z" fill="#2f8fd8" /></svg>
      </TaskSlot>
      <TaskSlot running>
        <div className="flex h-[16px] w-[21px] items-center justify-center rounded-[3px] bg-[#f5e100] text-[9px] font-bold text-[#222]">PDF</div>
      </TaskSlot>
      <div className="w-[1px] shrink-0" />
      <TaskSlot w="w-[48px]" active running>
        <div className="flex h-[23px] w-[23px] items-center justify-center bg-[#eef2f5]"><TableauLogo s={19} /></div>
      </TaskSlot>
      <div className="flex-1" />
      <svg width={18} height={18} viewBox="0 0 18 18" fill="none" stroke="#fff" className="mr-[22px]"><circle cx="12" cy="4.500" r="3" /><circle cx="5.500" cy="9" r="3" /><path d="M1 17c0-3 2-5 4.500-5s4.500 2 4.500 5M11 8c3 0 5 2 5 5" /></svg>
      <svg width={13} height={8} viewBox="0 0 13 8" fill="none" stroke="#fff" strokeWidth={1.200} className="mr-[12px]"><path d="M1 7l5.500-6L12 7" /></svg>
      <div className="mr-[8px] flex h-[22px] w-[12px] items-center justify-center rounded-full bg-[#0a78f0]">
        <svg width={8} height={14} viewBox="0 0 8 14" fill="none" stroke="#fff"><path d="M1 4l6 6-3 3V1l3 3-6 6" /></svg>
      </div>
      <svg width={17} height={14} viewBox="0 0 17 14" fill="none" stroke="#fff" className="mr-[8px]"><path d="M1 4.500h3l4-3.500v12L4 9.500H1zM10.500 4.500c1 1.500 1 3.500 0 5M12.500 3c1.500 2.500 1.500 5.500 0 8M14.500 1.500c2 3.500 2 7.500 0 11" /></svg>
      <svg width={17} height={13} viewBox="0 0 17 13" fill="none" stroke="#fff" className="mr-[9px]"><path d="M5.500 4h11v7h-11z" /><path d="M2 0v3M4 0v3M1 3h4v2.500L3 7 1 5.500z" fill="#fff" /><rect x="7" y="5.500" width="4" height="4" fill="#fff" stroke="none" /></svg>
      <svg width={15} height={14} viewBox="0 0 15 14" fill="none" stroke="#fff" strokeWidth={0.9} className="mr-[10px]"><path d="M1 12.500C1 7 6 3 12 2.500M3.500 13C4 9 7.500 6 12 5.500M6 13.500C6.500 11 9 9 12 8.500" /><circle cx="13" cy="12" r="1.500" fill="#fff" /></svg>
      <svg width={17} height={17} viewBox="0 0 17 17" fill="none" stroke="#fff" className="mr-[12px]"><path d="M5 13 12 2l3 2-7 10zM1 15c3-4 5-1 8-2M12 8l4-2" /></svg>
      <svg width={24} height={14} viewBox="0 0 24 14" fill="none" stroke="#fff" className="mr-[9px]"><rect x=".5" y=".5" width="23" height="13" rx="1" /><path d="M3 4h18M3 7h18" strokeDasharray="1.500 1" /><path d="M6 10.500h12" /></svg>
      <span className="mr-[14px] text-[12px]">ENG</span>
      <div className="mr-[15px] flex w-[60px] flex-col items-center text-[12px] leading-[19px]">
        <span>17:23</span>
        <span className="whitespace-nowrap">16-10-2023</span>
      </div>
      <svg width={17} height={16} viewBox="0 0 17 16" fill="none" stroke="#fff" className="mr-[24px]"><path d="M.5 .5h16v12H11L8.500 15 6 12.500H.5z" /></svg>
    </div>
  );
}

export default function App() {
  return (
    <div className="flex h-[768px] w-[1366px] flex-col overflow-hidden bg-white font-['Noto_Sans',sans-serif]">
      <div className="flex h-[22px] items-center pt-[1px] font-['Open_Sans',sans-serif] text-[11.5px] text-[#111]">
        <div className="ml-[3px] flex h-[16px] w-[16px] items-center justify-center bg-[#edf2f6]"><TableauLogo s={15} /></div>
        <span className="ml-[4px]">Tableau - Book1</span>
        <div className="ml-auto flex items-center">
          <svg width={10} height={10} viewBox="0 0 10 10" stroke="#000" className="mr-[36px]"><path d="M0 5.500h10" /></svg>
          <svg width={10} height={10} viewBox="0 0 10 10" fill="none" stroke="#000" className="mr-[36px]"><path d="M.5 2.500h7v7h-7zM2.500 2.500v-2h7v7h-2" /></svg>
          <svg width={11} height={11} viewBox="0 0 11 11" stroke="#000" className="mr-[19px]"><path d="M.5 .5l10 10M10.500 .5l-10 10" /></svg>
        </div>
      </div>
      <div className="flex h-[21px] items-center pl-[8px] pt-[1px] font-['Open_Sans',sans-serif] text-[11.5px] text-[#111]">
        {MENU.map((m, i) => (
          <span key={i} className={`shrink-0 ${m.w}`}>
            {m.pre}<u>{m.u}</u>{m.rest}
          </span>
        ))}
      </div>
      <Toolbar />
      <div className="flex h-[594px] bg-[#f3f3f3]">
        <LeftPanel />
        <MiddleColumn />
        <div className="ml-[6px] flex w-[1024px] flex-col gap-[6px]">
          <div className="flex h-[28px] items-center border border-[#d4d4d4] bg-[#fafafa]">
            <svg width={12} height={12} viewBox="0 0 12 12" stroke="#666" strokeWidth={2} className="ml-[6px]"><path d="M2 3v9M6 3v9M10 3v9M2 0v1.500M6 0v1.500M10 0v1.500" /></svg>
            <span className="ml-[8px] w-[98px] text-[12px] text-[#666]">Columns</span>
            <div className="h-full w-px bg-[#d4d4d4]" />
            <div className="ml-[2px] flex gap-[2px]">
              <Pill label="SUM(Employer Costs.." color="bg-[#00b180]" />
              <Pill label="SUM(Employer Costs.." color="bg-[#00b180]" />
            </div>
          </div>
          <div className="flex h-[28px] items-center border border-[#d4d4d4] bg-[#fafafa]">
            <svg width={13} height={11} viewBox="0 0 13 11" stroke="#666" strokeWidth={2} className="ml-[6px]"><path d="M3 1.500h10M3 5.500h10M3 9.500h10M0 1.500h1.500M0 5.500h1.500M0 9.500h1.500" /></svg>
            <span className="ml-[7px] w-[98px] text-[12px] text-[#666]">Rows</span>
            <div className="h-full w-px bg-[#d4d4d4]" />
            <div className="ml-[2px] flex">
              <Pill label="Business types" color="bg-[#4996b2]">
                <svg width={11} height={11} viewBox="0 0 11 11" fill="#fff" className="ml-[30px]"><path d="M0 0h3v2H0zM0 4h6v2H0zM0 8h10v2H0z" /></svg>
              </Pill>
            </div>
          </div>
          <Chart />
          <div className="h-[1px]" />
        </div>
      </div>
      <TabBar />
      <StatusBar />
      <Taskbar />
    </div>
  );
}
